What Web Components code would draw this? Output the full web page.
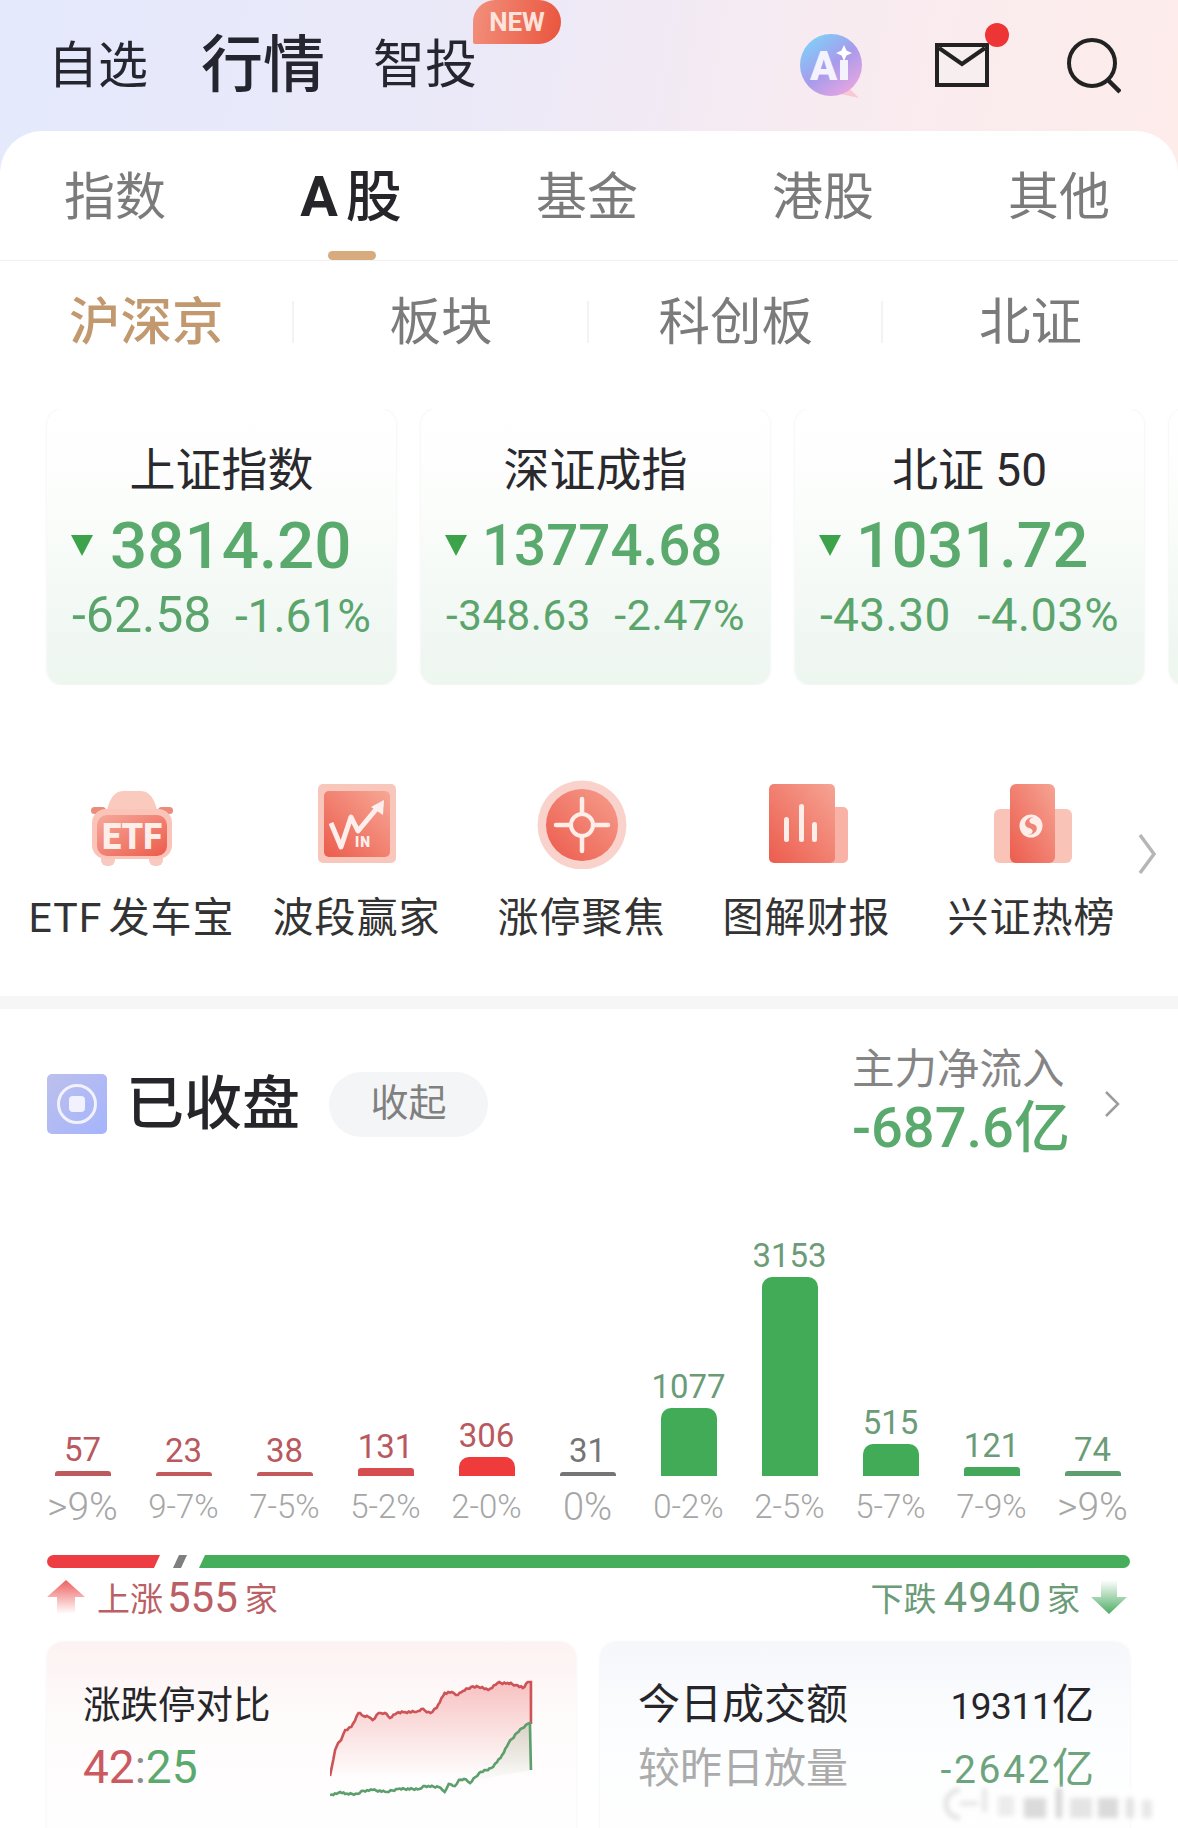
<!DOCTYPE html>
<html lang="zh-CN">
<head>
<meta charset="utf-8">
<title>行情</title>
<style>
  html, body { margin: 0; padding: 0; background: #fff; }
  body { font-family: Roboto, "Noto Sans CJK SC", sans-serif; color: #2b2b2f; }
</style>
</head>
<body>
<market-page>
  <market-header></market-header>
  <market-sheet>
    <tab-strip items="指数,A股,基金,港股,其他" active="1"></tab-strip>
    <sub-strip items="沪深京,板块,科创板,北证" active="0"></sub-strip>
    <card-row>
      <index-card name="上证指数" value="3814.20" change="-62.58" pct="-1.61%" style="--val:65.500px;--chg:50px;--pc:46px;--gap:17px"></index-card>
      <index-card name="深证成指" value="13774.68" change="-348.63" pct="-2.47%" style="--val:56.500px;--chg:42px;--pc:43px;--sp:.6px"></index-card>
      <index-card name="北证 50" value="1031.72" change="-43.30" pct="-4.03%" style="--val:63px;--chg:46px;--pc:47px;--sp:.4px"></index-card>
      <index-card></index-card>
    </card-row>
    <quick-row>
      <quick-item label="ETF 发车宝">
        <svg viewBox="0 0 90 90" width="90" height="90">
          <defs><linearGradient id="car" x1="0" y1="0" x2="1" y2="1"><stop offset="0" stop-color="#f6a99b"/><stop offset="1" stop-color="#ec5b4b"/></linearGradient></defs>
          <path d="M19 36Q23 12 36 12H54Q67 12 71 36Z" fill="#fbcabf"/>
          <rect x="4" y="28" width="15" height="7" rx="3.500" fill="#ea8b7c"/>
          <rect x="71" y="28" width="15" height="7" rx="3.500" fill="#ea8b7c"/>
          <rect x="14" y="71" width="14" height="16" rx="6" fill="#f7c9c1"/>
          <rect x="62" y="71" width="14" height="16" rx="6" fill="#f7c9c1"/>
          <rect x="5" y="30" width="80" height="50" rx="14" fill="#fac4b9"/>
          <rect x="10" y="36" width="70" height="41" rx="10" fill="url(#car)"/>
          <text x="45" y="70" text-anchor="middle" font-family="Roboto" font-weight="900" font-size="36" textLength="60" lengthAdjust="spacingAndGlyphs" fill="#fdeee9">ETF</text>
        </svg>
      </quick-item>
      <quick-item label="波段赢家">
        <svg viewBox="0 0 90 90" width="90" height="90">
          <defs><linearGradient id="win" x1="1" y1="0" x2="0" y2="1"><stop offset="0" stop-color="#f7a796"/><stop offset="1" stop-color="#ec5c4c"/></linearGradient></defs>
          <rect x="6" y="5" width="78" height="79" rx="5" fill="#f9c6bc"/>
          <rect x="12" y="12" width="66" height="66" rx="5" fill="url(#win)"/>
          <path d="M19 44L29 68L39 38L46 52L66 28" fill="none" stroke="#fdf0ec" stroke-width="5" stroke-linejoin="round"/>
          <path d="M59 28L72 21L71 36Z" fill="#fdf0ec"/>
          <text x="43" y="68" font-family="Roboto" font-weight="900" font-size="14" letter-spacing="1" fill="#fdf0ec">IN</text>
        </svg>
      </quick-item>
      <quick-item label="涨停聚焦">
        <svg viewBox="0 0 90 90" width="90" height="90">
          <defs><linearGradient id="aim" x1="1" y1="0" x2="0" y2="1"><stop offset="0" stop-color="#f69e8d"/><stop offset="1" stop-color="#ec5b4c"/></linearGradient></defs>
          <circle cx="45" cy="46" r="44.500" fill="#f9d3cb"/>
          <circle cx="45" cy="46" r="36" fill="url(#aim)"/>
          <circle cx="45" cy="46" r="11" fill="none" stroke="#fdeee9" stroke-width="4"/>
          <path d="M45 20V35M45 57V72M19 46H34M56 46H71" stroke="#fdeee9" stroke-width="4.500" stroke-linecap="round"/>
        </svg>
      </quick-item>
      <quick-item label="图解财报">
        <svg viewBox="0 0 90 90" width="90" height="90">
          <defs><linearGradient id="rep" x1="1" y1="0" x2="0" y2="1"><stop offset="0" stop-color="#f6a494"/><stop offset="1" stop-color="#ec5c4d"/></linearGradient></defs>
          <rect x="50" y="28" width="36" height="56" rx="5" fill="#f8b2a6"/>
          <rect x="7" y="5" width="66" height="79" rx="5" fill="url(#rep)"/>
          <rect x="22" y="38" width="5" height="25" rx="2.500" fill="#fdeee9"/>
          <rect x="37" y="25" width="5" height="38" rx="2.500" fill="#fdeee9"/>
          <rect x="50" y="43" width="5" height="20" rx="2.500" fill="#fdeee9"/>
        </svg>
      </quick-item>
      <quick-item label="兴证热榜">
        <svg viewBox="0 0 90 90" width="90" height="90">
          <defs><linearGradient id="hot" x1="1" y1="0" x2="0" y2="1"><stop offset="0" stop-color="#f6a494"/><stop offset="1" stop-color="#ec5c4d"/></linearGradient></defs>
          <rect x="7" y="30" width="78" height="54" rx="6" fill="#f9c3b8"/>
          <rect x="23" y="5" width="45" height="79" rx="6" fill="url(#hot)"/>
          <circle cx="44" cy="47" r="11.500" fill="#fdeee9"/>
          <path d="M47 38C38 38 35 47 42 49C47 50 47 55 41 56M41 56C50 56 53 47 46 45C41 44 41 39 47 38" fill="#ef8474"/>
        </svg>
      </quick-item>
    </quick-row>
    <close-head></close-head>
    <breadth-chart></breadth-chart>
    <ratio-bar></ratio-bar>
    <breadth-counts></breadth-counts>
    <stat-row>
      <limit-card></limit-card>
      <volume-card></volume-card>
    </stat-row>
  </market-sheet>
  <blur-mark></blur-mark>
</market-page>

<script>
// HELPER

function make(name, css, render) {
  customElements.define(
    name,
    class extends HTMLElement {
      constructor() {
        super();
        this.attachShadow({ mode: "open" });
      }
      connectedCallback() {
        this.shadowRoot.innerHTML = `<style>${css}</style>${render(this)}`;
      }
    }
  );
}

function list(el, attr) {
  return (el.getAttribute(attr) || "").split(",");
}

// PAGE

make(
  "market-page",
  `:host {
    display: block; position: relative; width: 1178px; height: 1828px; overflow: hidden;
    background: linear-gradient(100deg, #e4e9fc 0%, #ebe9f8 40%, #f8ebf0 70%, #fdecea 100%) 0 0 / 100% 200px no-repeat #fff;
  }`,
  () => `<slot></slot>`
);

make(
  "market-header",
  `:host { display: flex; align-items: center; position: relative; height: 131px; padding: 0 57px 0 48px; box-sizing: border-box; color: #25252f; }
   .a { font-size: 50px; line-height: 60px; }
   .b { font-size: 62px; line-height: 70px; font-weight: 500; margin: 0 48px 0 53px; }
   .c { font-size: 52px; line-height: 60px; }
   .new { position: absolute; left: 473px; top: 0; width: 88px; height: 44px; border-radius: 22px 22px 22px 2px;
     background: linear-gradient(100deg, #f2907c, #e9543d); color: #fde3dc; font: 700 26px/44px Roboto, sans-serif; text-align: center; }
   .icons { margin-left: auto; display: flex; align-items: center; }
   .ai { width: 64px; height: 68px; margin-right: 72px; }
   .mail { position: relative; width: 54px; height: 44px; margin: 0 78px 2px 0; }
   .dot { position: absolute; left: 50px; top: -20px; width: 24px; height: 24px; border-radius: 50%; background: #ee3535; }
   svg { display: block; }`,
  () => `
    <span class="a">自选</span><span class="b">行情</span><span class="c">智投</span>
    <span class="new">NEW</span>
    <div class="icons">
      <svg class="ai" viewBox="0 0 64 68">
        <defs>
          <linearGradient id="aig" x1="0.1" y1="0.1" x2="0.8" y2="1"><stop offset="0" stop-color="#7fd0f8"/><stop offset="0.5" stop-color="#a79bec"/><stop offset="1" stop-color="#eba6e0"/></linearGradient>
        </defs>
        <path d="M48 54L60 66L42 62Z" fill="#f7c9d4"/>
        <circle cx="32" cy="33" r="31" fill="url(#aig)"/>
        <text x="11" y="48" font-family="Roboto" font-weight="900" font-size="40" fill="#f4f3fd">A</text>
        <rect x="41" y="28" width="8" height="20" fill="#f4f3fd"/>
        <path d="M45 13L47.500 18.500L53 21L47.500 23.500L45 29L42.500 23.500L37 21L42.500 18.500Z" fill="#fff"/>
      </svg>
      <div class="mail">
        <svg width="54" height="44" viewBox="0 0 54 44">
          <rect x="2" y="2" width="50" height="40" fill="#f7eeef" stroke="#222" stroke-width="4"/>
          <path d="M4 5L27 21L50 5" fill="none" stroke="#222" stroke-width="4"/>
        </svg>
        <span class="dot"></span>
      </div>
      <svg width="54" height="56" viewBox="0 0 54 56">
        <circle cx="25" cy="25" r="23" fill="none" stroke="#222" stroke-width="4"/>
        <path d="M41 42L53 54" stroke="#222" stroke-width="4.500"/>
      </svg>
    </div>`
);

make(
  "market-sheet",
  `:host { display: block; background: #fff; border-radius: 42px 42px 0 0; height: 1697px; }`,
  () => `<slot></slot>`
);

make(
  "tab-strip",
  `:host { display: grid; grid-template-columns: repeat(5, 236px); grid-template-rows: 129px; height: 130px; margin-left: -3px; border-bottom: 1px solid #f1f1f1; box-sizing: border-box; overflow: hidden; }
   div { position: relative; text-align: center; font-size: 51px; line-height: 134px; color: #7b7b7b; }
   .on { color: #25252a; font-weight: 500; font-size: 56px; line-height: 132px; }
   .on span { margin-right: 8px; font-weight: 700; }
   .on::after { content: ""; position: absolute; left: 50%; margin-left: -23px; bottom: 0; width: 48px; height: 9px; border-radius: 5px; background: #d8ab7f; }`,
  (el) => {
    const active = Number(el.getAttribute("active"));
    return list(el, "items")
      .map((t, i) => `<div class="${i === active ? "on" : ""}">${t.replace(/^A/, "<span>A</span>")}</div>`)
      .join("");
  }
);

make(
  "sub-strip",
  `:host { display: grid; grid-template-columns: repeat(4, 1fr); align-items: center; height: 116px; padding: 4px 0 0 0; margin-left: -1px; }
   div { position: relative; text-align: center; font-size: 51.500px; line-height: 52px; color: #7b7b7b; }
   div:not(:last-child)::after { content: ""; position: absolute; right: 0; top: 4px; width: 2px; height: 42px; background: #f3f3f3; }
   .on { color: #c2986f; font-weight: 500; }`,
  (el) => {
    const active = Number(el.getAttribute("active"));
    return list(el, "items").map((t, i) => `<div class="${i === active ? "on" : ""}">${t}</div>`).join("");
  }
);

make(
  "card-row",
  `:host { display: flex; gap: 25px; margin-top: 28px; padding-left: 47px; overflow: hidden; }`,
  () => `<slot></slot>`
);

make(
  "index-card",
  `:host { flex: 0 0 349px; display: block; box-sizing: border-box; height: 276px; padding: 36px 25px 0; border-radius: 16px;
     background: linear-gradient(180deg, #fff 0%, #fbfdfb 35%, #f0f7f2 85%, #eef6f0 100%); box-shadow: 0 0 3px rgba(120,140,125,.16); }
   .name { font-size: 46px; line-height: 50px; text-align: center; color: #2a2a2e; }
   .main { display: flex; align-items: center; height: 76px; margin-top: 13px; color: #5aa96d; }
   .tri { width: 0; height: 0; border: 11px solid transparent; border-top: 21px solid #3da34a; border-bottom: 0; margin: 0 var(--gap, 15px) 2px -1px; }
   .val { font: 500 var(--val)/76px Roboto, sans-serif; }
   .sub { display: flex; justify-content: space-between; align-items: baseline; margin-top: 6px; line-height: 50px; color: #5ba56d; letter-spacing: var(--sp, 0); }
   .c { font-size: var(--chg); } .p { font-size: var(--pc); }`,
  (el) => {
    if (!el.hasAttribute("name")) return "";
    const get = (k) => el.getAttribute(k);
    return `
      <div class="name">${get("name")}</div>
      <div class="main"><span class="tri"></span><span class="val">${get("value")}</span></div>
      <div class="sub"><span class="c">${get("change")}</span><span class="p">${get("pct")}</span></div>`;
  }
);

make(
  "quick-row",
  `:host { display: flex; padding: 94px 0 0 19px; height: 217px; border-bottom: 13px solid #f6f6f6; }
   svg { width: 18px; height: 42px; margin: 54px 0 0 -6px; flex: none; }`,
  () => `<slot></slot>
    <svg viewBox="0 0 18 42"><path d="M2 2L16 21L2 40" fill="none" stroke="#b6b6b6" stroke-width="3.500"/></svg>`
);

make(
  "quick-item",
  `:host { flex: 0 0 225px; display: flex; flex-direction: column; align-items: center; }
   .ic { height: 90px; width: 90px; }
   ::slotted(svg) { display: block; }
   .t { margin-top: 26px; font-size: 41px; line-height: 46px; letter-spacing: 1px; word-spacing: -5px; color: #333; white-space: nowrap; }`,
  (el) => `<div class="ic"><slot></slot></div><div class="t">${el.getAttribute("label")}</div>`
);

make(
  "close-head",
  `:host { display: flex; align-items: center; height: 190px; padding: 0 58px 0 47px; }
   svg { display: block; flex: none; }
   .s { margin-left: 19px; font-size: 58px; line-height: 70px; font-weight: 500; color: #25252a; }
   .pill { margin-left: 29px; width: 159px; height: 65px; border-radius: 33px; background: #f4f5f6; text-align: center; font-size: 38px; line-height: 63px; color: #808080; }
   .flow { margin: 0 0 7px auto; width: 216px; }
   .l { font-size: 42.500px; line-height: 54px; color: #858585; white-space: nowrap; }
   .v { font-size: 56px; line-height: 62px; font-weight: 500; color: #5aa96d; white-space: nowrap; }
   .chev { margin-left: 36px; }`,
  () => `
    <svg width="60" height="60" viewBox="0 0 60 60">
      <defs><linearGradient id="st" x1="0" y1="0" x2="1" y2="1"><stop offset="0" stop-color="#bcc0ec"/><stop offset="1" stop-color="#a5b4fd"/></linearGradient></defs>
      <rect width="60" height="60" rx="5" fill="url(#st)"/>
      <circle cx="30" cy="30" r="18.500" fill="none" stroke="#f1f2fe" stroke-width="3"/>
      <rect x="22" y="22" width="16" height="16" rx="4" fill="#f1f2fe"/>
    </svg>
    <span class="s">已收盘</span>
    <span class="pill">收起</span>
    <div class="flow"><div class="l">主力净流入</div><div class="v">-687.6亿</div></div>
    <svg class="chev" width="16" height="28" viewBox="0 0 16 28"><path d="M2 2L14 14L2 26" fill="none" stroke="#9c9c9c" stroke-width="2.500"/></svg>`
);

// CHART

const BARS = [
  ["57", ">9%", 5, "#bd5a5e", "#b9585e", 39],
  ["23", "9-7%", 4, "#c4595c", "#b9585e", 33],
  ["38", "7-5%", 4, "#c4595c", "#b9585e", 33],
  ["131", "5-2%", 8, "#d74c4e", "#b9585e", 33],
  ["306", "2-0%", 19, "#ef3b3b", "#b9585e", 33],
  ["31", "0%", 4, "#757575", "#757575", 38],
  ["1077", "0-2%", 68, "#41ab57", "#6b9c77", 33],
  ["3153", "2-5%", 199, "#41ab57", "#6b9c77", 33],
  ["515", "5-7%", 32, "#41ab57", "#6b9c77", 33],
  ["121", "7-9%", 9, "#45a75a", "#6b9c77", 33],
  ["74", ">9%", 5, "#5f9f6f", "#6b9c77", 39],
];

make(
  "breadth-chart",
  `:host { display: grid; grid-template-columns: repeat(11, 101px); padding-left: 32px; }
   .col { height: 277px; display: flex; flex-direction: column; justify-content: flex-end; align-items: center; }
   .n { font-size: 33px; line-height: 36px; margin-bottom: 3px; }
   .bar { width: 56px; border-radius: 10px 10px 0 0; }
   .thin { border-radius: 3px 3px 0 0; }
   .lab { height: 53px; text-align: center; line-height: 62px; color: #a6a6a6; font-weight: 300; white-space: nowrap; }`,
  () =>
    BARS.map(
      ([n, , h, c, tc]) =>
        `<div class="col"><span class="n" style="color:${tc}">${n}</span><span class="bar ${h < 12 ? "thin" : ""}" style="height:${h}px;background:${c}"></span></div>`
    ).join("") +
    BARS.map(([, l, , , , fs]) => `<div class="lab" style="font-size:${fs}px">${l}</div>`).join("")
);

make(
  "ratio-bar",
  `:host { display: flex; height: 13px; margin: 26px 0 0 47px; width: 1083px; }
   i { display: block; height: 13px; }
   .r { width: 113px; background: #ee3d42; border-radius: 7px 0 0 7px; clip-path: polygon(0 0, 100% 0, calc(100% - 6px) 100%, 0 100%); }
   .g { width: 14px; margin-left: 13px; background: #7f7f7f; clip-path: polygon(6px 0, 100% 0, calc(100% - 6px) 100%, 0 100%); }
   .u { width: 931px; margin-left: 12px; background: #46ad5a; border-radius: 0 7px 7px 0; clip-path: polygon(6px 0, 100% 0, 100% 100%, 0 100%); }`,
  () => `<i class="r"></i><i class="g"></i><i class="u"></i>`
);

make(
  "breadth-counts",
  `:host { display: flex; justify-content: space-between; align-items: center; height: 44px; margin: 7px 0 0 47px; width: 1083px; font-size: 33px; }
   div { display: flex; align-items: center; }
   b { font-weight: 400; font-size: 42px; margin: 0 7px 0 4px; }
   .up { color: #bb5f65; } .dn { color: #6b9c77; }
   svg { flex: none; }`,
  () => `
    <div class="up">
      <svg width="38" height="34" viewBox="0 0 38 34" style="margin-right:12px">
        <defs><linearGradient id="au" x1="0" y1="0" x2="0" y2="1"><stop offset="0" stop-color="#ee5f5f"/><stop offset="1" stop-color="#ee5f5f" stop-opacity="0"/></linearGradient></defs>
        <path d="M19 0L38 17H28V34H10V17H0Z" fill="url(#au)"/>
      </svg>
      上涨<b>555</b>家
    </div>
    <div class="dn">
      下跌<b style="margin:0 5px 0 7px;letter-spacing:1px">4940</b>家
      <svg width="36" height="34" viewBox="0 0 36 34" style="margin:0 3px 0 11px">
        <defs><linearGradient id="ad" x1="0" y1="1" x2="0" y2="0"><stop offset="0" stop-color="#4fae64"/><stop offset="1" stop-color="#4fae64" stop-opacity="0"/></linearGradient></defs>
        <path d="M18 34L36 17H26V0H10V17H0Z" fill="url(#ad)"/>
      </svg>
    </div>`
);

make(
  "stat-row",
  `:host { display: flex; gap: 24px; margin: 23px 0 0 47px; width: 1083px; }`,
  () => `<slot></slot>`
);

// points of the two limit lines, x 0..200, y 0..116
const RED = [[0,96],[5,70],[8,63],[11,60],[15,50],[21,47],[28,33],[33,36],[38,37],[42,40],[48,33],[54,33],[59,38],[66,33],[74,32],[85,32],[90,29],[99,33],[105,28],[113,13],[120,12],[126,15],[131,11],[139,7],[150,7],[156,10],[165,3],[175,3],[183,5],[190,8],[195,2],[198,2]];
const GREEN = [[0,115],[8,113],[10,112],[15,114],[27,114],[31,111],[42,110],[56,112],[67,109],[88,109],[92,106],[107,107],[113,112],[117,104],[123,106],[127,100],[132,99],[138,103],[147,93],[159,88],[168,78],[176,63],[184,53],[193,45],[197,43]];

function jitter(points, amount) {
  const out = [];
  points.forEach(([x, y], i) => {
    out.push([x, y]);
    const next = points[i + 1];
    if (next) {
      const steps = Math.max(1, Math.floor((next[0] - x) / 1.6));
      for (let s = 1; s < steps; s++) {
        const k = s / steps;
        const wob = ((s * 7 + i * 13) % 5 - 2) * amount;
        out.push([x + (next[0] - x) * k, y + (next[1] - y) * k + wob]);
      }
    }
  });
  return out;
}

function toPath(points) {
  return points.map(([x, y]) => `${x.toFixed(1)},${y.toFixed(1)}`).join(" ");
}

make(
  "limit-card",
  `:host { flex: 0 0 529px; display: flex; box-sizing: border-box; height: 220px; padding: 38px 41px 0 36px; border-radius: 16px;
     background: linear-gradient(180deg, #fdf2f2 0%, #fefbfb 35%, #fff 100%); box-shadow: 0 0 3px rgba(200,170,170,.2); }
   .t { font-size: 37.500px; line-height: 50px; color: #26262a; white-space: nowrap; }
   .v { margin-top: 9px; font-size: 46px; line-height: 56px; color: #8d8d8d; }
   .re { color: #cb5a60; } .gr { color: #5aa96d; }
   svg { display: block; margin-left: auto; flex: none; }`,
  () => {
    const red = jitter(RED, 0.45);
    const green = jitter(GREEN, 0.4);
    return `
      <div><div class="t">涨跌停对比</div><div class="v"><span class="re">42</span>:<span class="gr">25</span></div></div>
      <svg width="205" height="118" viewBox="0 0 202 118" preserveAspectRatio="none">
        <defs>
          <linearGradient id="fr" x1="0" y1="0" x2="0" y2="1"><stop offset="0" stop-color="#ee6a6a" stop-opacity=".38"/><stop offset="1" stop-color="#ee6a6a" stop-opacity="0"/></linearGradient>
          <linearGradient id="fg" x1="0" y1="0" x2="0" y2="1"><stop offset="0" stop-color="#5aa96d" stop-opacity=".2"/><stop offset="1" stop-color="#5aa96d" stop-opacity="0"/></linearGradient>
        </defs>
        <polygon points="${toPath(red)} 198,44 198,96 0,96" fill="url(#fr)"/>
        <polygon points="100,108 ${toPath(green.slice(-40))} 198,90" fill="url(#fg)"/>
        <polyline points="${toPath(red)} 198,44" fill="none" stroke="#cd5356" stroke-width="2.600"/>
        <polyline points="${toPath(green)} 198,90" fill="none" stroke="#5c9e6c" stroke-width="2.600"/>
      </svg>`;
  }
);

make(
  "volume-card",
  `:host { flex: 0 0 530px; display: block; box-sizing: border-box; height: 220px; padding: 38px 36px 0 38px; border-radius: 16px;
     background: linear-gradient(180deg, #f5f7fb 0%, #fcfdfe 40%, #fff 100%); box-shadow: 0 0 3px rgba(170,180,200,.2); }
   .r { display: flex; justify-content: space-between; font-size: 42px; line-height: 50px; color: #26262a; white-space: nowrap; }
   .r + .r { margin-top: 12px; color: #ababab; }
   .n { font-size: 37px; letter-spacing: -.5px; }
   .d { color: #6da47d; font-size: 39px; letter-spacing: 2.600px; }
   .y { font-size: 42px; letter-spacing: 0; }`,
  () => `
    <div class="r"><span>今日成交额</span><span class="n">19311<span class="y">亿</span></span></div>
    <div class="r"><span>较昨日放量</span><span class="d">-2642<span class="y">亿</span></span></div>`
);

make(
  "blur-mark",
  `:host { position: absolute; left: 936px; top: 1776px; width: 242px; height: 50px; }
   svg { display: block; }`,
  () => `
    <svg width="242" height="50" viewBox="0 0 242 50">
      <defs><filter id="bl" x="-10%" y="-40%" width="120%" height="180%"><feGaussianBlur stdDeviation="2.500"/></filter></defs>
      <rect x="8" y="12" width="232" height="32" rx="10" fill="#fff" opacity=".72" filter="url(#bl)"/>
      <g filter="url(#bl)" fill="#dadada">
        <path d="M24 14A14 14 0 0 0 24 42" fill="none" stroke="#dcdcdc" stroke-width="4"/>
        <rect x="24" y="26" width="18" height="3"/>
        <rect x="46" y="12" width="5" height="24" fill="#e6e6e6"/>
        <rect x="62" y="20" width="16" height="20" fill="#ececec"/>
        <rect x="88" y="22" width="22" height="20"/>
        <rect x="120" y="12" width="6" height="30" fill="#d4d4d4"/>
        <rect x="134" y="22" width="22" height="20" fill="#e4e4e4"/>
        <rect x="162" y="22" width="20" height="20"/>
        <rect x="190" y="22" width="8" height="20" fill="#e2e2e2"/>
        <rect x="206" y="24" width="10" height="18" fill="#e8e8e8"/>
      </g>
    </svg>`
);
</script>
</body>
</html>
